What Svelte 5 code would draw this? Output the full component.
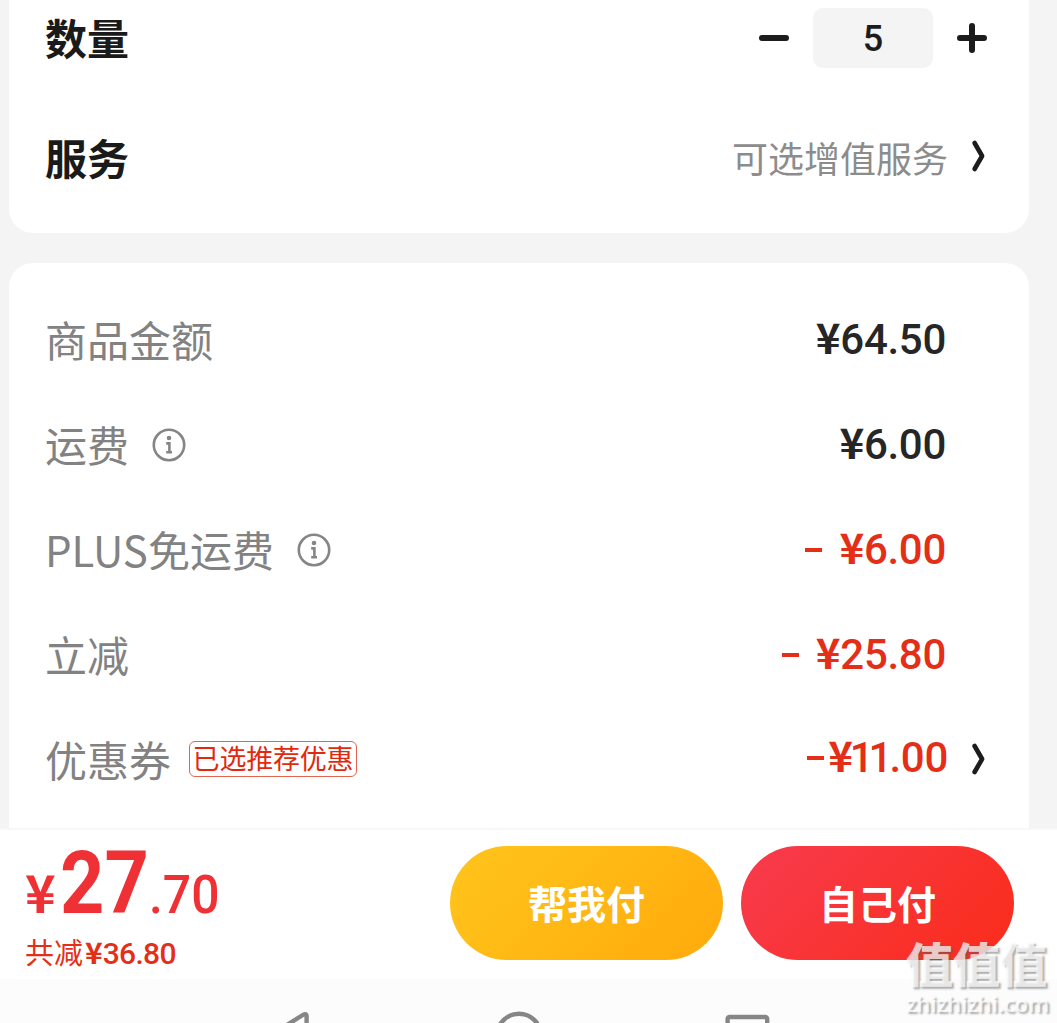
<script>
  const rows = [
    { label: '商品金额', whole: '64', cents: '.50' },
    { label: '运费', info: true, whole: '6', cents: '.00' },
    { label: 'PLUS免运费', info: true, minus: true, whole: '6', cents: '.00', red: true },
    { label: '立减', minus: true, whole: '25', cents: '.80', red: true },
    { label: '优惠券', tag: '已选推荐优惠', minus: true, tight: true, whole: '11', cents: '.00', red: true, arrow: true }
  ];
</script>

{#snippet chevron()}
  <svg class="chevron" width="20" height="36" viewBox="0 0 20 36">
    <path d="M4.6 5 L12.1 18 L4.6 31" fill="none" stroke="#1c1c1c" stroke-width="4.6" stroke-linecap="round" stroke-linejoin="round" />
  </svg>
{/snippet}

<div class="screen">
  <section class="card top">
    <div class="option">
      <span class="title">数量</span>
      <div class="stepper">
        <svg width="32" height="32" viewBox="0 0 32 32"><path d="M4 16H28" stroke="#1c1c1c" stroke-width="6" stroke-linecap="round" /></svg>
        <span class="qty">5</span>
        <svg width="32" height="32" viewBox="0 0 32 32"><path d="M4 16H28M16 4V28" stroke="#1c1c1c" stroke-width="6" stroke-linecap="round" /></svg>
      </div>
    </div>
    <div class="option service">
      <span class="title">服务</span>
      <div class="pick"><span class="hint">可选增值服务</span>{@render chevron()}</div>
    </div>
  </section>

  <section class="card bill">
    {#each rows as row}
      <div class="row">
        <span class="label">{row.label}</span>
        {#if row.info}
          <svg class="info" width="34" height="34" viewBox="0 0 34 34" fill="none" stroke="#858585">
            <circle cx="17" cy="17" r="15.2" stroke-width="2.6" />
            <circle cx="17" cy="10" r="2.3" fill="#858585" stroke="none" />
            <path d="M14.2 15.4H17.4V24.2M14.2 24.2H20" stroke-width="2.6" />
          </svg>
        {/if}
        {#if row.tag}<span class="tag">{row.tag}</span>{/if}
        <div class="value" class:red={row.red} class:tight={row.tight}>
          {#if row.minus}<i class="minus"></i>{/if}
          <span class="amount"><span class="sign">¥</span><span class="whole">{row.whole}</span>{row.cents}</span>
        </div>
        {#if row.arrow}{@render chevron()}{/if}
      </div>
    {/each}
  </section>

  <footer class="pay">
    <div class="sum">
      <div class="total"><span class="yen">¥</span><span class="int">27</span><span class="dec">.70</span></div>
      <div class="saved">共减<span class="sign">¥</span><b>36.80</b></div>
    </div>
    <button class="btn amber">帮我付</button>
    <button class="btn crimson">自己付</button>
  </footer>

  <nav class="system">
    <svg width="60" height="45" viewBox="0 0 60 45" fill="none" stroke="#868686" stroke-width="4.4" stroke-linejoin="round"><path d="M0 56 L32.6 35.5 Q35.3 34.4 35.6 37 V76 Z" /></svg>
    <svg width="60" height="45" viewBox="0 0 60 45" fill="none" stroke="#868686" stroke-width="4.4"><circle cx="30" cy="56.5" r="21.8" /></svg>
    <svg width="60" height="45" viewBox="0 0 60 45" fill="none" stroke="#868686" stroke-width="4.4"><rect x="10.6" y="38" width="39.6" height="41" rx="2" /></svg>
  </nav>

  <div class="mark"><span class="mark-cn">值值值</span><span class="mark-url">zhizhizhi.com</span></div>
</div>

<style>
  :global(body) { margin: 0; background: #f4f4f4; overflow: hidden; }
  .screen {
    position: relative;
    width: 1057px;
    height: 1023px;
    overflow: hidden;
    background: #f4f4f4;
    font-family: "Noto Sans CJK SC", sans-serif;
    display: flex;
    flex-direction: column;
  }
  .card { box-sizing: border-box; width: 1020px; margin-left: 9px; background: #fff; flex: none; }
  .top { height: 233px; border-radius: 0 0 24px 24px; padding: 0 41px 0 36px; }
  .option { height: 76px; display: flex; align-items: center; justify-content: space-between; }
  .service { margin-top: 43px; }
  .title { font-size: 42px; line-height: 60px; font-weight: 700; color: #1a1a1a; margin-bottom: 3px; }
  .service .title { margin-bottom: 1px; }
  .stepper { display: flex; align-items: center; gap: 23px; }
  .stepper svg { display: block; }
  .qty {
    width: 120px; height: 60px; border-radius: 10px; background: #f4f4f4;
    font: 500 36px/62px Roboto, sans-serif; color: #1c1c1c; text-align: center;
  }
  .pick { display: flex; align-items: center; }
  .hint { font-size: 36px; line-height: 60px; color: #8c8c8c; margin-right: 22px; margin-bottom: 1px; }
  .pick .chevron { margin-right: -2px; }
  .chevron { display: block; flex: none; margin-bottom: 2px; }
  .bill { margin-top: 30px; height: 565px; border-radius: 24px 24px 0 0; padding: 24px 39px 0 36px; }
  .row { height: 105px; display: flex; align-items: center; }
  .label { font-size: 42px; line-height: 60px; color: #828282; white-space: nowrap; margin-bottom: 1px; }
  .info { margin: 1px 0 0 23px; }
  .tag {
    box-sizing: border-box; width: 168px; height: 36px; margin-left: 18px; margin-bottom: 1px;
    border: 1px solid #e2664f; border-radius: 6px; color: #e1290f;
    font-size: 27px; line-height: 31px; text-align: center; white-space: nowrap; letter-spacing: -0.2px;
  }
  .value { margin-left: auto; margin-right: 44px; display: flex; align-items: center; color: #262626; }
  .value.red { color: #e42e18; }
  .amount { font: 500 42px/60px Roboto, sans-serif; letter-spacing: -0.3px; white-space: nowrap; }
  .sign { font-family: "Noto Sans CJK SC", sans-serif; font-weight: 700; line-height: 1; margin-right: 0; }
  .minus { width: 17px; height: 4px; background: currentColor; margin-right: 17px; }
  .tight .minus { margin-right: 4px; }
  .value.tight { margin-right: 22px; margin-bottom: 3px; }
  .tight .whole { letter-spacing: -5px; margin-left: -3px; margin-right: 2px; }
  .pay {
    box-sizing: border-box; height: 151px; flex: none; background: #fff; border-top: 2px solid #f8f8f8;
    display: flex; align-items: flex-start; padding: 16px 43px 0 25px;
  }
  .sum { width: 425px; }
  .total {
    height: 84px; display: flex; align-items: baseline; line-height: 75px; color: #ef3135;
    font-family: Roboto, sans-serif; white-space: nowrap;
  }
  .yen { width: 35px; font: 700 52px/75px "Noto Sans CJK SC", sans-serif; }
  .int { width: 89px; font-size: 87px; font-weight: 700; transform: scaleX(0.89); transform-origin: left; }
  .dec { font-size: 53px; font-weight: 500; transform: scaleX(0.94); transform-origin: left; }
  .saved { font-size: 29px; line-height: 42px; color: #e42e18; white-space: nowrap; }
  .saved .sign { font-size: 30px; margin-left: 2px; }
  .saved b { font: 500 30px/42px Roboto, sans-serif; letter-spacing: -0.7px; }
  .btn {
    width: 273px; height: 114px; border: 0; border-radius: 57px; padding: 0 0 1px; color: #fff;
    font: 700 39px/113px "Noto Sans CJK SC", sans-serif;
  }
  .amber { background: linear-gradient(135deg, #ffc51c, #ffaa0c); }
  .crimson { margin-left: 18px; background: linear-gradient(135deg, #f73b4e, #fa2c19); }
  .system { height: 45px; background: #fcfcfc; display: flex; padding-left: 271px; gap: 158px; }
  .system svg { flex: none; }
  .system svg:last-child { margin-left: 10px; }
  .mark {
    position: absolute; left: 906px; top: 933px; width: 146px; display: flex; flex-direction: column;
    color: rgba(255, 255, 255, 0.74); white-space: nowrap; text-shadow: 2px 2px 2px rgba(90, 90, 90, 0.5);
  }
  .mark-cn { font-size: 47px; line-height: 58px; font-weight: 900; }
  .mark-url { font: 600 22px/24px "Open Sans", sans-serif; }
</style>
